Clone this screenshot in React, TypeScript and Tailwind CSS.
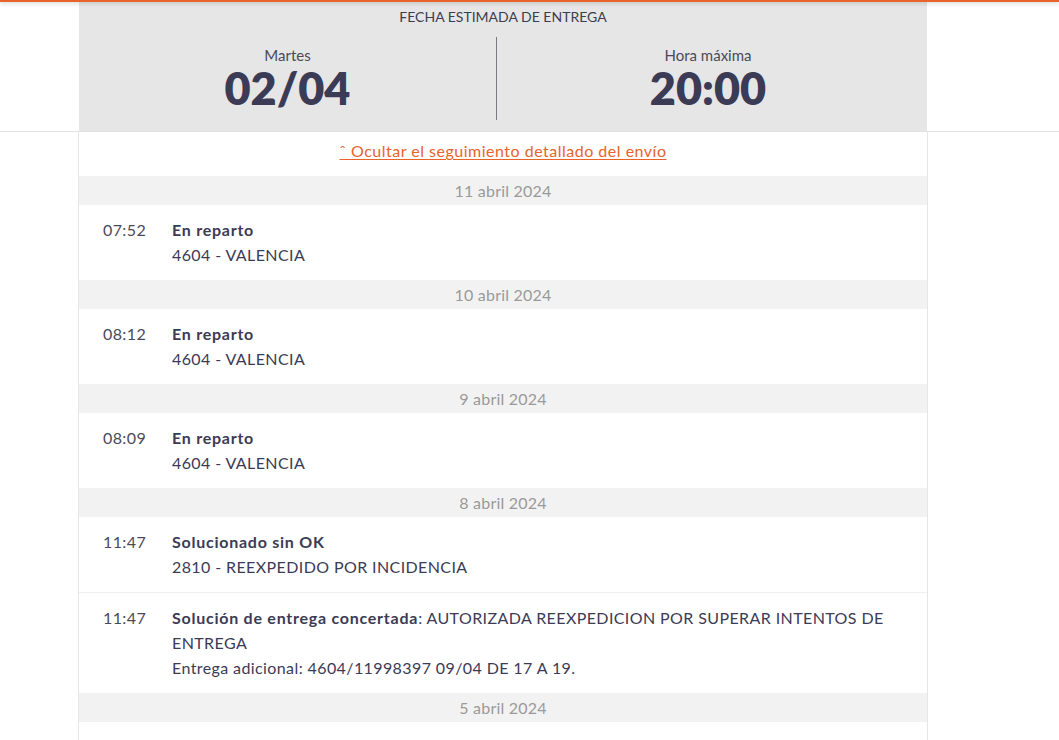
import React from "react";

type Evento = {
  hora: string;
  titulo: string;
  detalle?: string;
  lineas: string[];
};

type Dia = {
  fecha: string;
  eventos: Evento[];
};

const dias: Dia[] = [
  {
    fecha: "11 abril 2024",
    eventos: [{ hora: "07:52", titulo: "En reparto", lineas: ["4604 - VALENCIA"] }],
  },
  {
    fecha: "10 abril 2024",
    eventos: [{ hora: "08:12", titulo: "En reparto", lineas: ["4604 - VALENCIA"] }],
  },
  {
    fecha: "9 abril 2024",
    eventos: [{ hora: "08:09", titulo: "En reparto", lineas: ["4604 - VALENCIA"] }],
  },
  {
    fecha: "8 abril 2024",
    eventos: [
      { hora: "11:47", titulo: "Solucionado sin OK", lineas: ["2810 - REEXPEDIDO POR INCIDENCIA"] },
      {
        hora: "11:47",
        titulo: "Solución de entrega concertada",
        detalle: ": AUTORIZADA REEXPEDICION POR SUPERAR INTENTOS DE ENTREGA",
        lineas: ["Entrega adicional: 4604/11998397 09/04 DE 17 A 19."],
      },
    ],
  },
  { fecha: "5 abril 2024", eventos: [] },
];

const App = () => {
  return (
    <div className="min-h-[740px] bg-white font-['Lato','Noto_Sans',sans-serif] text-[#3b3b55] relative">
      {/* barra naranja superior */}
      <div className="absolute top-0 left-0 right-0 h-[2px] bg-[#e8632a] shadow-[0_1px_4px_rgba(0,0,0,0.25)] z-10"></div>

      <div className="border-b border-[#e3e3e3]">
        <div className="ml-[79px] w-[848px] bg-[#e6e6e6] pt-[8px] h-[131px]">
          <div className="text-center text-[14px] leading-[18px] text-[#3d3d4f]">FECHA ESTIMADA DE ENTREGA</div>
          <div className="flex mt-[11px]">
            <div className="w-[417px] flex flex-col items-center pt-[9px]">
              <div className="text-[15px] leading-[19px] text-[#4a4a5a]">Martes</div>
              <div className="text-[45px] leading-[46px] font-extrabold">02/04</div>
            </div>
            <div className="w-px h-[83px] bg-[#7a7a85]"></div>
            <div className="flex-1 flex flex-col items-center pt-[9px] pr-[8px]">
              <div className="text-[15px] leading-[19px] text-[#4a4a5a]">Hora máxima</div>
              <div className="text-[45px] leading-[46px] font-extrabold">20:00</div>
            </div>
          </div>
        </div>
      </div>

      <div className="ml-[78px] w-[850px] border-x border-[#e6e6e6]">
        <div className="h-[44px] flex items-center justify-center pb-[6px]">
          <a href="#" className="text-[16px] tracking-[0.5px] text-[#e8632a] underline underline-offset-2">
            ˆ Ocultar el seguimiento detallado del envío
          </a>
        </div>
        {dias.map((dia) => (
          <div key={dia.fecha}>
            <div className="h-[29px] bg-[#f2f2f2] flex items-center justify-center text-[16px] tracking-[0.2px] text-[#9a9a9a]">
              {dia.fecha}
            </div>
            {dia.eventos.map((ev, i) => (
              <div
                key={i}
                className={
                  "flex pl-[24px] pr-[30px] pt-[12px] pb-[13px] text-[16px] leading-[25px] tracking-[0.4px] " +
                  (i > 0 ? "border-t border-[#efefef]" : "")
                }
              >
                <div className="w-[69px] shrink-0 text-[#4a4a5a]">{ev.hora}</div>
                <div className="flex-1">
                  <div>
                    <span className="font-bold tracking-[0.75px]">{ev.titulo}</span>
                    {ev.detalle && <span>{ev.detalle}</span>}
                  </div>
                  {ev.lineas.map((l) => (
                    <div key={l}>{l}</div>
                  ))}
                </div>
              </div>
            ))}
          </div>
        ))}
        <div className="h-[40px]"></div>
      </div>
    </div>
  );
};

export default App;
